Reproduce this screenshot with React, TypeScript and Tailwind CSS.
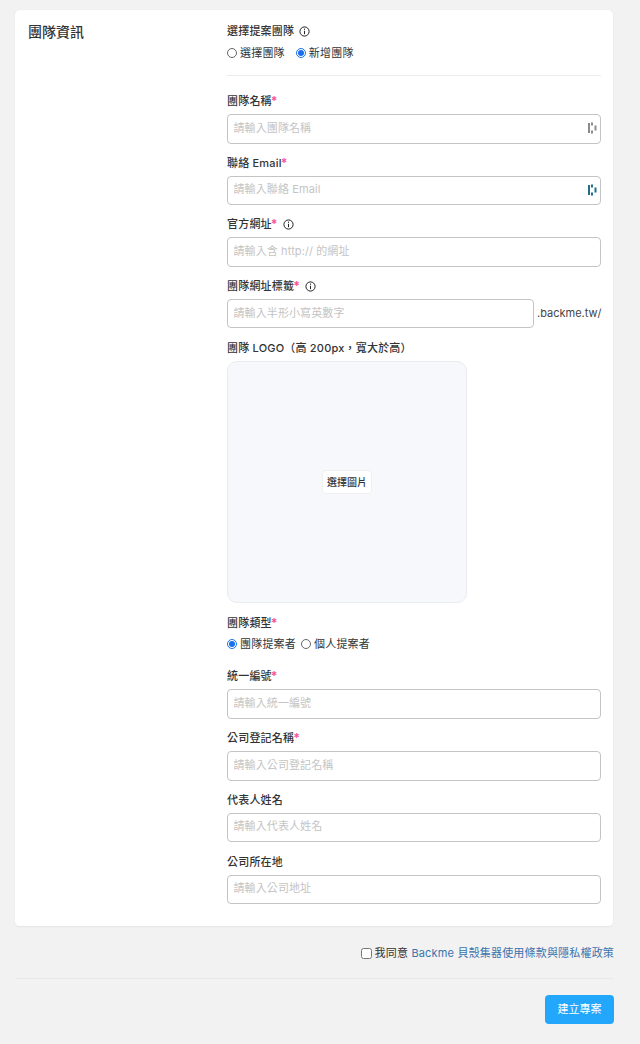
import React from 'react';

const FONT = "font-['Inter','Noto_Sans_CJK_TC',sans-serif]";

const InfoIcon = () => (
  <svg width="11" height="11" viewBox="0 0 11 11" fill="none" className="ml-[5px] mt-[1px] shrink-0">
    <circle cx="5.5" cy="5.5" r="4.6" stroke="#222" strokeWidth="1" />
    <rect x="5" y="2.6" width="1" height="1.2" fill="#222" />
    <rect x="5" y="4.8" width="1" height="3.4" fill="#222" />
  </svg>
);

const PassIcon = ({ color }: { color: string }) => (
  <svg width="10" height="12" viewBox="0 0 10 12" className="absolute right-[3px] top-[8px]">
    <rect x="0" y="1" width="2" height="10" fill={color} />
    <rect x="3" y="0.5" width="2" height="3" fill={color} />
    <rect x="3" y="8.5" width="2" height="3" fill={color} />
    <rect x="6.5" y="3.5" width="2" height="5" fill={color} />
  </svg>
);

const Label = ({ text, required, info }: { text: string; required?: boolean; info?: boolean }) => (
  <div className="flex items-center h-[19px] pt-[1px] text-[11px] tracking-[0.2px] leading-[18px] font-medium text-[#333] mb-[4px]">
    <span>{text}</span>
    {required && <span className="-ml-[1px] text-[12px] font-bold text-[#f4558f]">*</span>}
    {info && <InfoIcon />}
  </div>
);

const TextInput = ({ placeholder, icon }: { placeholder: string; icon?: string }) => (
  <div className="relative w-full">
    <input
      type="text"
      readOnly
      placeholder={placeholder}
      className="block w-full h-[29.6px] pl-[5.5px] pr-[5px] pb-[2px] text-[11px] tracking-[0.1px] bg-white border border-[#c4c4c4] rounded-[4px] outline-none placeholder:text-[#c4c4c4]"
    />
    {icon && <PassIcon color={icon} />}
  </div>
);

const Radio = ({ label, checked }: { label: string; checked?: boolean }) => (
  <label className="flex items-center text-[11px] tracking-[0.2px] leading-[18px] text-[#333]">
    <span className={`w-[10px] h-[10px] rounded-full bg-white mr-[3px] flex items-center justify-center border ${checked ? 'border-[#1a73e8]' : 'border-[#666]'}`}>
      {checked && <span className="w-[6px] h-[6px] rounded-full bg-[#1a6ff0]" />}
    </span>
    {label}
  </label>
);

const Field = ({ label, placeholder, required, info, icon }: { label: string; placeholder: string; required?: boolean; info?: boolean; icon?: string }) => (
  <div className="mb-[9px]">
    <Label text={label} required={required} info={info} />
    <TextInput placeholder={placeholder} icon={icon} />
  </div>
);

export default function App() {
  return (
    <div className={`${FONT} w-[640px] h-[1044px] bg-[#f2f2f2] pt-[10px] pl-[15px] pr-[26px] overflow-hidden`}>
      <div className="flex w-[598px] h-[917px] bg-white rounded-[5px] border-b border-[#e6e8e8] shadow-[0_0_2px_rgba(0,0,0,0.06)] pt-[12px] pl-[13px] pr-[12px]">
        <h2 className="w-[199px] shrink-0 text-[14px] leading-[20px] font-medium text-[#333]">團隊資訊</h2>

        <div className="w-[374px]">
          {/* 選擇提案團隊 */}
          <div className="flex items-center h-[18px] text-[11px] tracking-[0.2px] font-medium text-[#333] mb-[4px]">
            <span>選擇提案團隊</span>
            <InfoIcon />
          </div>
          <div className="flex gap-[11px]">
            <Radio label="選擇團隊" />
            <Radio label="新增團隊" checked />
          </div>
          <hr className="mt-[13px] mb-[15px] border-[#ececec]" />

          <Field label="團隊名稱" placeholder="請輸入團隊名稱" required icon="#8c8c8c" />
          <Field label="聯絡 Email" placeholder="請輸入聯絡 Email" required icon="#1f6f86" />
          <Field label="官方網址" placeholder="請輸入含 http:// 的網址" required info />

          <div className="mb-[10px]">
            <Label text="團隊網址標籤" required info />
            <div className="flex items-center">
              <div className="w-[307px] shrink-0">
                <TextInput placeholder="請輸入半形小寫英數字" />
              </div>
              <span className="ml-[3px] text-[11px] text-[#444]">.backme.tw/</span>
            </div>
          </div>

          <Label text="團隊 LOGO（高 200px，寬大於高）" />
          <div className="flex items-center justify-center w-[240px] h-[242px] bg-[#f7f8fb] border border-[#e9ebee] rounded-[10px] mb-[10px]">
            <button type="button" className="w-[50px] h-[24px] bg-white rounded-[4px] border border-[#f0f0f0] text-[10px] font-medium text-[#333]">
              選擇圖片
            </button>
          </div>

          <Label text="團隊類型" required />
          <div className="flex gap-[5px] -mt-[1px] mb-[13px]">
            <Radio label="團隊提案者" checked />
            <Radio label="個人提案者" />
          </div>

          <Field label="統一編號" placeholder="請輸入統一編號" required />
          <Field label="公司登記名稱" placeholder="請輸入公司登記名稱" required />
          <Field label="代表人姓名" placeholder="請輸入代表人姓名" />
          <div className="pt-[0.4px]">
            <Field label="公司所在地" placeholder="請輸入公司地址" />
          </div>
        </div>
      </div>

      <div className="flex items-center justify-end h-[18px] mt-[17px] text-[11px] tracking-[0.18px] text-[#333]">
        <input type="checkbox" readOnly className="w-[11px] h-[11px] mr-[3px]" />
        <span>我同意&nbsp;</span>
        <a className="text-[#3a74ad]">Backme 貝殼集器使用條款與隱私權政策</a>
      </div>

      <div className="mt-[16px] border-t border-[#e9e9e9] flex justify-end pt-[16px]">
        <button type="button" className="w-[69px] h-[29px] rounded-[4px] bg-[#22a7fd] text-white text-[11px]">
          建立專案
        </button>
      </div>
    </div>
  );
}
